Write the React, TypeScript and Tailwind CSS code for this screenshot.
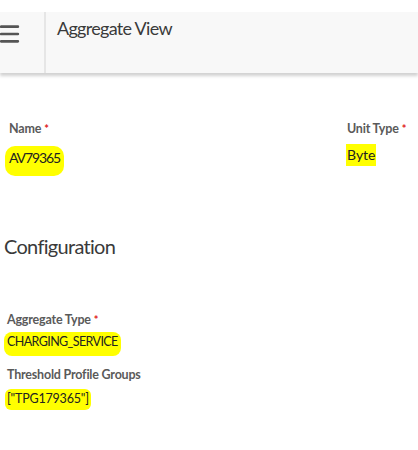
import { Menu } from "lucide-react";

function Marked({ children, className = "" }: { children: React.ReactNode; className?: string }) {
  return (
    <span className={`inline-block rounded-[6px] bg-[#ffff00] ${className}`}>{children}</span>
  );
}

function Label({ text, required }: { text: string; required?: boolean }) {
  return (
    <div className="text-[12.5px] font-bold leading-none tracking-[-0.2px] text-[#5a5a5a]">
      {text}
      {required ? <span className="ml-[3px] align-top text-[11px] text-[#e02020]">*</span> : null}
    </div>
  );
}

export default function App() {
  return (
    <div
      className="h-[450px] w-[418px] overflow-hidden bg-white"
      style={{ fontFamily: "Lato, 'Open Sans', sans-serif" }}
    >
      <div className="h-[12px]" />
      <header className="flex h-[61px] bg-[#f8f8f8] shadow-[0_3px_3px_rgba(0,0,0,0.18)]">
        <div className="flex w-[44px] items-start pt-[8px]">
          <Menu className="-ml-[3px] h-[28px] w-[25px] text-[#555]" strokeWidth={2.6} />
        </div>
        <div className="border-l-2 border-[#e6e6e6] pl-[11px] pt-[3px] text-[18px] tracking-[-0.7px] text-[#3a3a3a]">
          Aggregate View
        </div>
      </header>

      <section className="flex justify-between px-[9px] pr-[5px] pt-[50px]">
        <div>
          <Label text="Name" required />
          <Marked className="-ml-[4px] mt-[10px] rounded-[10px] px-[4px] pb-[11px] pt-[5px] text-[14px] leading-none tracking-[-1.1px] text-[#222]">
            AV79365
          </Marked>
        </div>
        <div className="w-[66px]">
          <Label text="Unit Type" required />
          <Marked className="-ml-[1px] mt-[8px] rounded-none px-[1px] py-[4px] text-[14px] leading-none text-[#222]">
            Byte
          </Marked>
        </div>
      </section>

      <h2 className="mt-[55px] pl-[4px] text-[20px] tracking-[-0.7px] text-[#3a3a3a]">
        Configuration
      </h2>

      <section className="pl-[7px] pt-[53px]">
        <Label text="Aggregate Type" required />
        <Marked className="-ml-[3px] mt-[6px] rounded-[8px] px-[3px] pb-[7px] pt-[4px] text-[12.5px] leading-none tracking-[-0.6px] text-[#222]">
          CHARGING_SERVICE
        </Marked>
        <div className="mt-[13px]">
          <Label text="Threshold Profile Groups" />
        </div>
        <Marked className="-ml-[2px] mt-[8px] rounded-[6px] px-[2px] pb-[4px] pt-[4px] text-[12.5px] leading-none tracking-[-0.2px] text-[#222]">
          ["TPG179365"]
        </Marked>
      </section>
    </div>
  );
}
